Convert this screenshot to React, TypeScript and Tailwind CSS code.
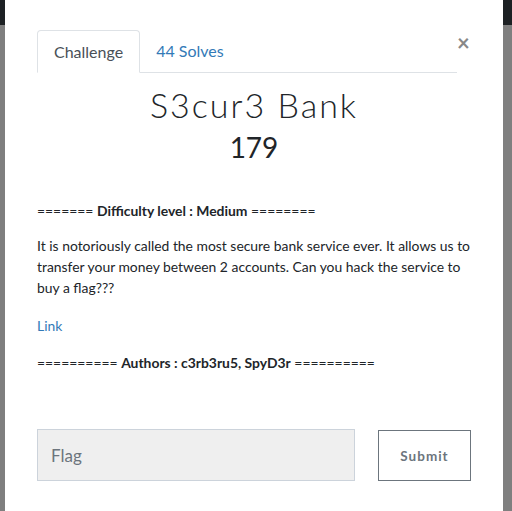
import { useState } from "react"

export default function App() {
  const [flag, setFlag] = useState("")

  return (
    <div className="flex h-[511px] w-[512px] overflow-hidden bg-[#7f7f7f] font-['Lato',sans-serif]">
      {/* left strip of the page behind the modal */}
      <div className="flex w-[5px] flex-col">
        <div className="h-[25px] bg-[#1d2124]" />
        <div className="flex-1 bg-[#7f7f7f]" />
      </div>

      <div className="relative w-[498px] bg-white px-[32px] pt-[30px]">
        <button className="absolute left-[452px] top-[32px] text-[22px] font-bold leading-none text-[#888]">
          ×
        </button>

        {/* tabs */}
        <div className="mr-[14px] flex border-b border-[#dee2e6]">
          <div className="-mb-px h-[43px] rounded-t-[4px] border border-b-white border-[#dee2e6] bg-white px-[16px] text-[16px] leading-[41px] text-[#495057]">
            Challenge
          </div>
          <div className="px-[16px] text-[16px] leading-[41px] text-[#337ab7]">44 Solves</div>
        </div>

        <h1 className="mt-[12px] text-center text-[34px] font-light leading-[40px] tracking-[2px] text-[#212529]">
          S3cur3 Bank
        </h1>
        <h3 className="mt-[5px] text-center text-[28px] leading-[34px] text-[#212529]">179</h3>

        <div className="-mr-[8px] mt-[36px] text-[13.9px] leading-[21px] text-[#212529]">
          <p>
            ======= <b>Difficulty level : Medium</b> ========
          </p>
          <p className="mt-[14px]">
            It is notoriously called the most secure bank service ever. It allows us to transfer your
            money between 2 accounts. Can you hack the service to buy a flag???
          </p>
          <p className="mt-[17px]">
            <a className="text-[#337ab7]">Link</a>
          </p>
          <p className="mt-[16px]">
            ========== <b>Authors : c3rb3ru5, SpyD3r</b> ==========
          </p>
        </div>

        <div className="mt-[56px] flex items-center">
          <input
            value={flag}
            onChange={(e) => setFlag(e.target.value)}
            placeholder="Flag"
            className="h-[52px] w-[318px] border border-[#ccd3db] bg-[#efefef] px-[13px] text-[17px] text-[#495057] outline-none placeholder:text-[#6c757d]"
          />
          <button className="ml-auto h-[51px] w-[93px] border border-[#6c757d] pt-[2px] text-[13.5px] font-bold tracking-[1px] text-[#6c757d]">
            Submit
          </button>
        </div>
      </div>

      <div className="flex w-[9px] flex-col">
        <div className="h-[25px] bg-[#1d2124]" />
        <div className="flex-1 bg-[#7f7f7f]" />
      </div>
    </div>
  )
}
